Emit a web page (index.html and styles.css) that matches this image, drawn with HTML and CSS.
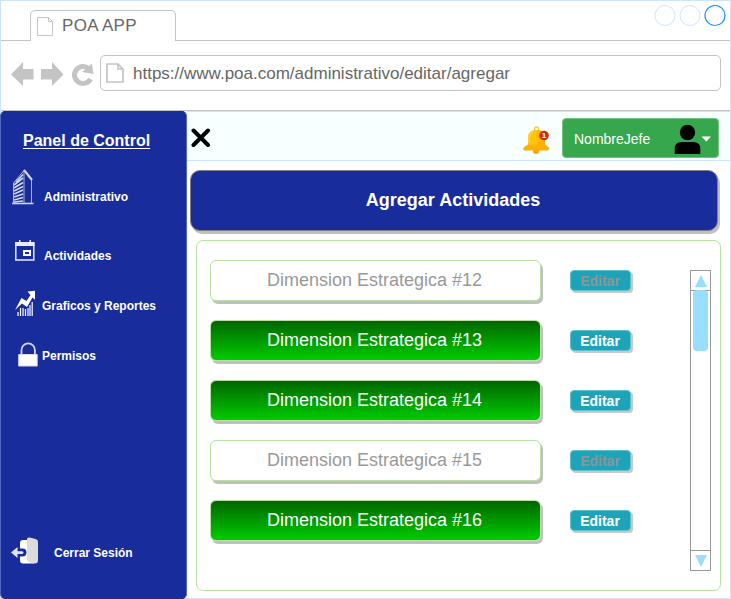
FILE: index.html
```
<!DOCTYPE html>
<html lang="es">
<head>
<meta charset="utf-8">
<title>POA APP</title>
<link rel="stylesheet" href="styles.css">
</head>
<body>
<div class="window">
  <div class="tabbar">
    <div class="tab">
      <svg class="tab-icon" width="17" height="20" viewBox="0 0 17 20"><path d="M.5 .5h11l4 4v14h-15zM11.500 .5v4h4" fill="#fff" stroke="#c4c4c4"/></svg>
      <span>POA APP</span>
    </div>
    <svg class="controls" width="72" height="22" viewBox="0 0 72 22" fill="none"><circle cx="11" cy="10.500" r="10" stroke="#cce5ff"/><circle cx="36" cy="10.500" r="10" stroke="#cce5ff"/><circle cx="61" cy="10.500" r="10" stroke="#1e90ff" stroke-width="1.200"/></svg>
  </div>
  <div class="toolbar">
    <svg class="nav" width="85" height="28" viewBox="0 0 85 28"><g fill="#c4c4c4"><path d="M0 13.500 12 1v7h10.500v10.500H12V25z"/><path d="M52.500 13.500 41 1v7H30v10.500h11V25z"/></g><path d="M79.500 18A8.500 8.500 0 1 1 77.500 7.500" fill="none" stroke="#c4c4c4" stroke-width="5"/><path d="M81 2.500 82.500 13l-11.500-2z" fill="#c4c4c4"/></svg>
    <div class="address">
      <svg width="18" height="20" viewBox="0 0 18 20"><path d="M1 1h11l5 5v13H1zM12 1v5h5" fill="#fff" stroke="#c4c4c4" stroke-width="1.700"/></svg>
      <span>https://www.poa.com/administrativo/editar/agregar</span>
    </div>
  </div>
  <div class="page">
    <nav class="sidebar">
      <h1>Panel de Control</h1>
      <a class="item admin">
        <svg width="22" height="36" viewBox="0 0 22 36"><g fill="none" stroke="#cfd4f2"><path d="M1.500 34V14L12 1.500M19.500 10.500V34M12 1v33" stroke-width=".8"/><path d="m12 1 8 10" stroke-width="2.200"/><path d="m2 16 9-7M2 19l9-5.500M2 22l9-4.500M2 25l9-4M2 28l9-3M2 31l9-2.500M2 33l9-1M4 13l7-7.500" stroke-width="1.700"/><path d="M0 34.500h21.500" stroke-width="1.600"/></g></svg>
        <span>Administrativo</span>
      </a>
      <a class="item act">
        <svg width="22" height="22" viewBox="0 0 22 22"><path d="M1.800 3h18v17h-18z" fill="none" stroke="#e8eafa" stroke-width="1.500"/><path d="M1 2h19.500v4H1zM5 0h1.500v3H5zM15.500 0H17v3h-1.500z" fill="#e8eafa"/><path d="M10 11h6v4h-6z" fill="none" stroke="#fff" stroke-width="2"/></svg>
        <span>Actividades</span>
      </a>
      <a class="item graf">
        <svg width="21" height="27" viewBox="0 0 21 27"><path d="M0 20 6.500 8l5 3L15.500 5 12.500 1.500 20 .8v9L17.500 7.500 12 17l-5-3.500z" fill="#fff"/><path d="M3 26v-4M5.500 26v-8M8 26v-8M10.500 26v-7M13 26v-8M15 26V15M17.200 26V12" stroke="#fff" stroke-width="1.200"/></svg>
        <span>Graficos y Reportes</span>
      </a>
      <a class="item perm">
        <svg width="20" height="25" viewBox="0 0 20 25"><path d="M3.500 13V8a6.700 6.700 0 0 1 13.400 0v5" fill="none" stroke="#d5d8e4" stroke-width="1.800"/><path d="M.7 12.500h18.500v11.500H.7z" fill="#fff" stroke="#d5d8e4"/></svg>
        <span>Permisos</span>
      </a>
      <a class="item salir">
        <svg width="28" height="28" viewBox="0 0 28 28"><path d="M16 3h-4q-3 0-3 3v5.500h2.500a4 4 0 0 1 0 8H9V23q0 3.500 3 3.500h11L18 3z" fill="#fff"/><path d="M16 2.500Q16 0 18.500.5l6 1.500q2.500.7 2.500 3v18q0 3.500-3 3.500-8-1-8-4z" fill="#dcdcdc"/><path d="M0 15.500 6.500 10v4.200h5a1.400 1.400 0 0 1 0 2.700h-5V21z" fill="#e2e2e8"/><path d="M7 13.200h4.700a2.400 2.400 0 0 1 0 4.800H8" fill="none" stroke="#182c9c" stroke-width="1.500"/></svg>
        <span>Cerrar Sesión</span>
      </a>
    </nav>
    <main class="main">
      <header class="topbar">
        <svg class="close" width="20" height="20" viewBox="0 0 20 20"><path d="m2.500 2.500 14.500 14.500M17 2.500 2.500 17" stroke="#000" stroke-width="4" stroke-linecap="round"/></svg>
        <svg class="bell" width="28" height="30" viewBox="0 0 28 30"><circle cx="13.500" cy="3" r="2" fill="none" stroke="#ffc82a" stroke-width="1.300"/><circle cx="13" cy="25" r="3" fill="#fca000"/><path d="M5 20v-8q0-8 8.500-8t8.500 8v8z" fill="#ffc40a"/><path d="M14 4q8 0 8 8v8h-7z" fill="#ffb400"/><path d="M5 18.500h17l4 3q1 3-2 3H2.500Q-1 24.500.8 21.500z" fill="#ffb000"/><path d="M6 17v-5q0-4 4-6" fill="none" stroke="#ffe05c"/><circle cx="21" cy="9.500" r="4.800" fill="#cf2d13"/><text x="21" y="12.400" class="count">1</text></svg>
        <div class="user">
          <span>NombreJefe</span>
          <svg width="38" height="32" viewBox="0 0 38 32"><circle cx="13.500" cy="9.500" r="7.700"/><path d="M.7 31v-5.500q0-6.500 7-6.500h11.600q7 0 7 6.500V31z"/><path d="M27.500 13.500h9.500l-4.700 5z" fill="#fff"/></svg>
        </div>
      </header>
      <h2 class="title">Agregar Actividades</h2>
      <section class="panel">
        <div class="rows">
          <div class="row off"><div class="dim">Dimension Estrategica #12</div><div class="edit">Editar</div></div>
          <div class="row"><div class="dim">Dimension Estrategica #13</div><div class="edit">Editar</div></div>
          <div class="row"><div class="dim">Dimension Estrategica #14</div><div class="edit">Editar</div></div>
          <div class="row off"><div class="dim">Dimension Estrategica #15</div><div class="edit">Editar</div></div>
          <div class="row"><div class="dim">Dimension Estrategica #16</div><div class="edit">Editar</div></div>
        </div>
        <div class="scroll">
          <div class="arrow up"><svg width="12" height="12" viewBox="0 0 12 12"><path d="M6 0l6 12H0z"/></svg></div>
          <div class="thumb"></div>
          <div class="arrow down"><svg width="12" height="12" viewBox="0 0 12 12"><path d="M6 12l6-12H0z"/></svg></div>
        </div>
      </section>
    </main>
  </div>
</div>
</body>
</html>
```
FILE: styles.css
```
* { box-sizing: border-box; }
body { margin: 0; background: #fff; font-family: "Liberation Sans", Arial, sans-serif; overflow: hidden; }
svg { display: block; flex: none; }
h1, h2 { margin: 0; }
.window { width: 731px; height: 599px; border: 1px solid #cce5ff; display: flex; flex-direction: column; }

.tabbar { height: 40px; flex: none; border-bottom: 1px solid #c4c4c4; display: flex; justify-content: space-between; }
.tab { width: 146px; height: 31px; margin: 9px 0 0 29px; border: 1px solid #c4c4c4; border-bottom: 0; border-radius: 5px 5px 0 0; background: #fff; display: flex; padding: 6px 0 0 6px; gap: 8px; font-size: 17px; letter-spacing: 0.3px; line-height: 18px; color: #666; }
.controls { margin: 4px 4px 0 0; }

.toolbar { height: 70px; flex: none; border-bottom: 1px solid #c4c4c4; display: flex; padding: 14px 9px 0 10px; }
.nav { margin-top: 6px; }
.address { flex: 1; margin-left: 4px; height: 36px; border: 1px solid #c4c4c4; border-radius: 5px; display: flex; align-items: center; gap: 9px; padding-left: 5px; font-size: 17px; color: #666; }
.address span { padding-top: 2px; }

.page { flex: 1; display: flex; min-height: 0; }
.sidebar { width: 187px; height: 488px; flex: none; margin-left: -1px; background: #182c9c; border: 1px solid #5468c0; border-top-color: #182c9c; border-bottom-color: #182c9c; border-radius: 5px; color: #fff; display: flex; flex-direction: column; }
.sidebar h1 { font-size: 16px; line-height: 20px; margin: 19px 0 0 22px; text-decoration: underline; text-decoration-thickness: 1px; text-underline-offset: 2px; white-space: nowrap; }
.item { display: flex; font-size: 12px; font-weight: bold; line-height: 14px; white-space: nowrap; }
.admin { margin: 18px 0 0 11px; height: 36px; gap: 10px; }
.admin span { padding-top: 21px; }
.act { margin: 35px 0 0 14px; height: 22px; gap: 7px; }
.act svg { margin-left: -1px; margin-right: 1px; }
.act span { padding-top: 9px; }
.graf { margin: 28px 0 0 15px; height: 27px; gap: 5px; }
.graf svg { margin-left: -1px; margin-right: 1px; }
.graf span { padding-top: 9px; }
.perm { margin: 26px 0 0 17px; height: 25px; gap: 4px; }
.perm svg { margin-top: -1px; }
.perm span { padding-top: 6px; }
.salir { margin: 169px 0 0 11px; height: 28px; gap: 14px; }
.salir svg { margin-left: -1px; margin-right: 1px; }
.salir span { padding-top: 9px; }

.main { flex: 1; display: flex; flex-direction: column; min-width: 0; }
.topbar { height: 50px; flex: none; background: #f7ffff; border: solid #cce5ff; border-width: 1px 0; display: flex; }
.close { margin: 16px 0 0 4px; }
.bell { margin: 14px 0 0 312px; }
.count { font-size: 8px; font-weight: bold; fill: #fff; text-anchor: middle; }
.user { width: 157px; height: 40px; margin: 6px 0 0 11px; background: #36a74c; border: 1px solid #72c480; border-radius: 4px; color: #fff; font-size: 14px; display: flex; align-items: center; justify-content: space-between; padding: 1px 6px 0 11px; }
.title { width: 528px; height: 61px; flex: none; margin: 9px 0 0 3px; padding-right: 2px; border: 1px solid #808080; border-radius: 10px; background: #182c9c; box-shadow: 2px 3px 0 #c0c0c0; color: #fff; font-size: 18px; line-height: 59px; text-align: center; }
.panel { width: 525px; height: 351px; flex: none; margin: 9px 0 0 9px; border: 1px solid #b9e0a5; border-radius: 7px; display: flex; justify-content: space-between; padding: 19px 9px 0 13px; }
.rows { display: flex; flex-direction: column; gap: 19px; }
.row { display: flex; gap: 29px; height: 41px; }
.dim { width: 331px; height: 41px; border: 1px solid #b9e0a5; border-radius: 6px; background: linear-gradient(#006600, #00cc00); box-shadow: 2px 3px 0 #c0c0c0; color: #fff; padding-right: 2px; font-size: 18px; line-height: 38px; text-align: center; }
.edit { width: 61px; height: 21px; margin-top: 10px; padding-right: 1px; border: 1px solid #62c1cf; border-radius: 4px; background: #1ea4b8; box-shadow: 2px 2px 0 #c8c8c8; color: #fff; font-size: 14px; font-weight: bold; line-height: 20px; text-align: center; }
.off .dim { background: #fff; color: #999; }
.off .edit { color: #8f9496; }
.scroll { width: 21px; height: 301px; margin-top: 10px; border: 1px solid #999; display: flex; flex-direction: column; align-items: center; }
.arrow { width: 19px; height: 20px; flex: none; display: flex; align-items: center; justify-content: center; fill: #99ddff; }
.up { border-bottom: 1px solid #999; }
.down { border-top: 1px solid #999; margin-top: auto; }
.thumb { width: 15px; height: 61px; margin-top: -1px; border-radius: 4px; background: #99ddff; }
```
